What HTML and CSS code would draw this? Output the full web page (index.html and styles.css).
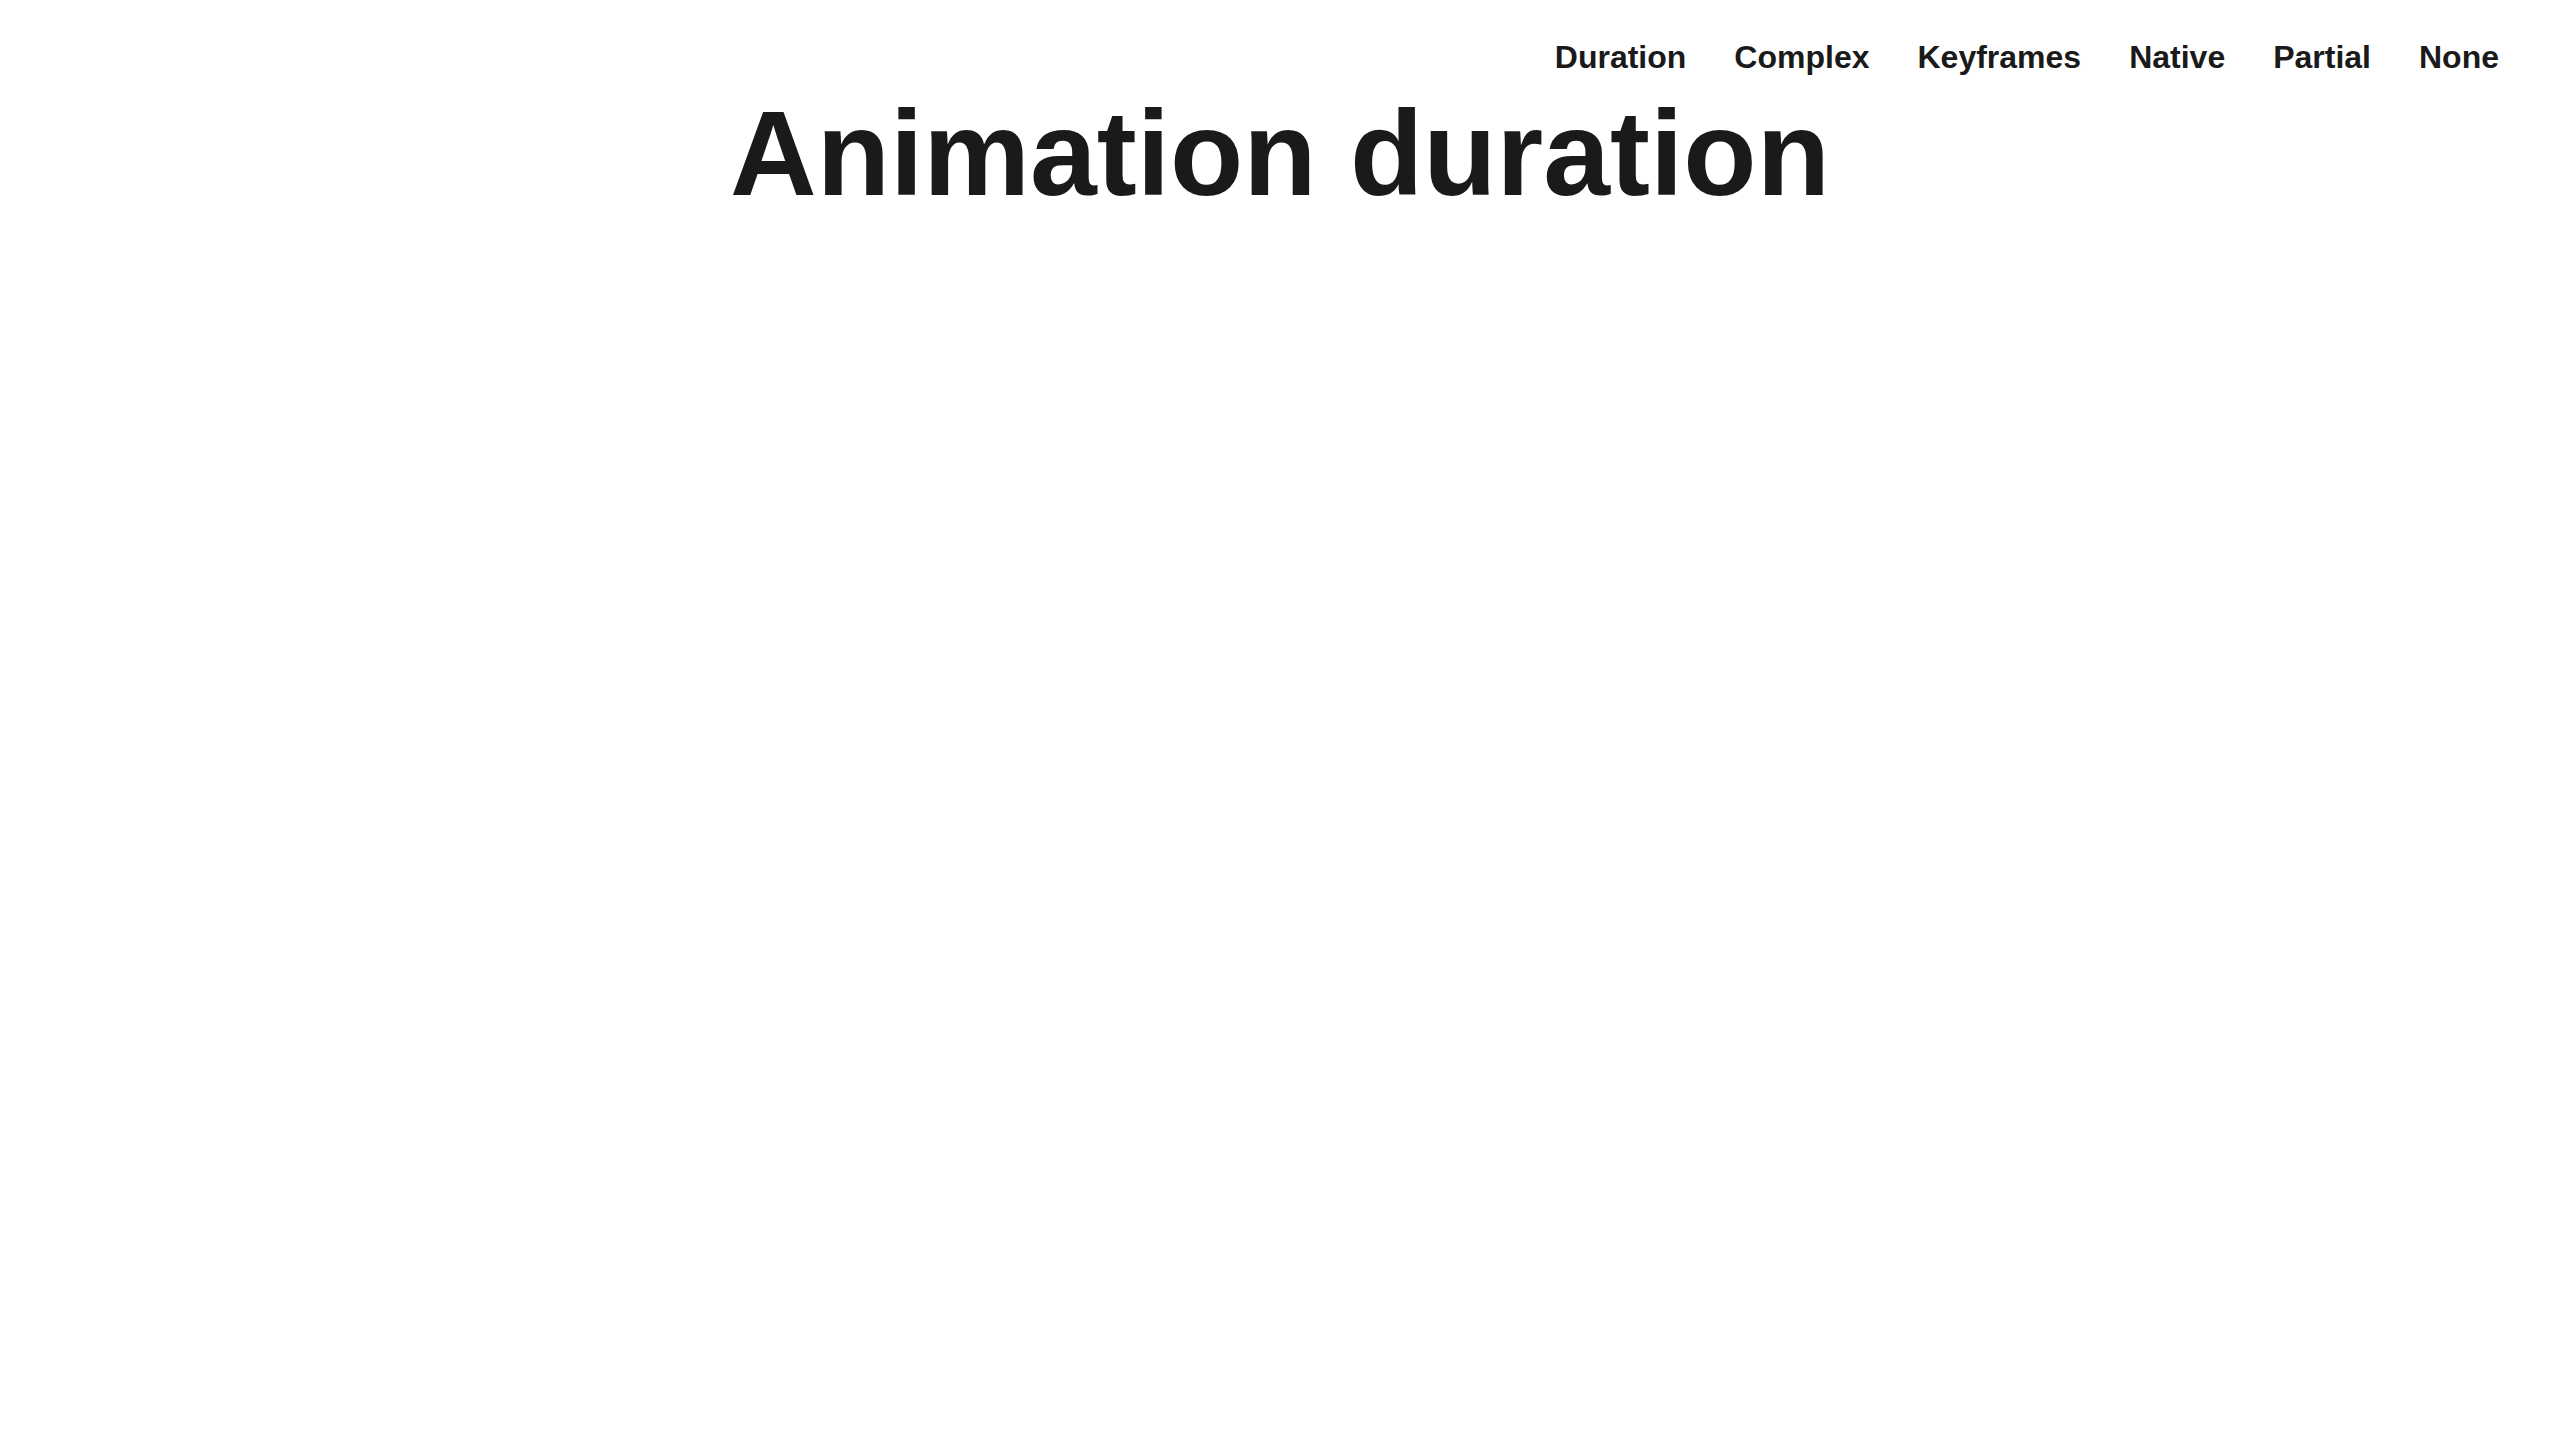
FILE: index.html
```html
<!DOCTYPE html>
<html lang="en">
<head>
<meta charset="utf-8">
<title>Animation duration</title>
<link rel="stylesheet" href="styles.css">
</head>
<body>
<header class="top">
  <nav class="nav">
    <a class="nav-link" href="#">Duration</a>
    <a class="nav-link" href="#">Complex</a>
    <a class="nav-link" href="#">Keyframes</a>
    <a class="nav-link" href="#">Native</a>
    <a class="nav-link" href="#">Partial</a>
    <a class="nav-link" href="#">None</a>
  </nav>
</header>
<main class="main">
  <h1 class="title">Animation duration</h1>
</main>
</body>
</html>
```
FILE: styles.css
```css
html, body {
  margin: 0;
  padding: 0;
  background: #ffffff;
}
body {
  font-family: "Liberation Sans", Arial, sans-serif;
  color: #1a1a1a;
}
.top {
  display: flex;
  justify-content: flex-end;
  padding: 39px 61px 0 0;
}
.nav {
  display: flex;
  gap: 48px;
}
.nav-link {
  font-size: 32px;
  font-weight: 700;
  color: #1a1a1a;
  text-decoration: none;
  line-height: 37px;
}
.main {
  display: flex;
  justify-content: center;
  padding-top: 8px;
}
.title {
  margin: 0;
  font-size: 120px;
  font-weight: 700;
  line-height: 138px;
}
```
